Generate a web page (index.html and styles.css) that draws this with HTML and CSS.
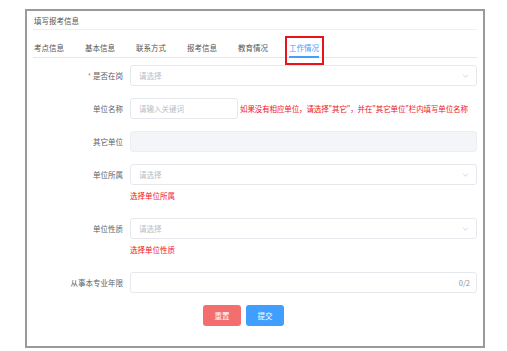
FILE: index.html
```html
<!DOCTYPE html>
<html lang="zh">
<head>
<meta charset="utf-8">
<link rel="stylesheet" href="styles.css">
</head>
<body>
<div class="frame">
  <div class="title">填写报考信息</div>
  <div class="tabs">
    <span class="tab">考点信息</span>
    <span class="tab">基本信息</span>
    <span class="tab">联系方式</span>
    <span class="tab">报考信息</span>
    <span class="tab">教育情况</span>
    <span class="tab active">工作情况<span class="mark"></span></span>
  </div>
  <div class="form">
    <div class="row">
      <div class="label"><span class="req">*</span> 是否在岗</div>
      <div class="control">
        <div class="input select"><span class="ph">请选择</span><svg class="chev" viewBox="0 0 8 5" width="7" height="4"><path d="M1 1l3 3 3-3" fill="none" stroke="#c6c9d0" stroke-width="1"/></svg></div>
      </div>
    </div>
    <div class="row">
      <div class="label">单位名称</div>
      <div class="control inline">
        <div class="input short"><span class="ph">请输入关键词</span></div>
        <span class="hint">如果没有相应单位，请选择"其它"，并在"其它单位"栏内填写单位名称</span>
      </div>
    </div>
    <div class="row">
      <div class="label">其它单位</div>
      <div class="control">
        <div class="input disabled"></div>
      </div>
    </div>
    <div class="row">
      <div class="label">单位所属</div>
      <div class="control">
        <div class="input select"><span class="ph">请选择</span><svg class="chev" viewBox="0 0 8 5" width="7" height="4"><path d="M1 1l3 3 3-3" fill="none" stroke="#c6c9d0" stroke-width="1"/></svg></div>
        <div class="err">选择单位所属</div>
      </div>
    </div>
    <div class="row">
      <div class="label">单位性质</div>
      <div class="control">
        <div class="input select"><span class="ph">请选择</span><svg class="chev" viewBox="0 0 8 5" width="7" height="4"><path d="M1 1l3 3 3-3" fill="none" stroke="#c6c9d0" stroke-width="1"/></svg></div>
        <div class="err">选择单位性质</div>
      </div>
    </div>
    <div class="row">
      <div class="label">从事本专业年限</div>
      <div class="control">
        <div class="input count"><span class="ph"></span><span class="num">0/2</span></div>
      </div>
    </div>
    <div class="actions">
      <button class="btn reset" type="button">重置</button>
      <button class="btn submit" type="button">提交</button>
    </div>
  </div>
</div>
</body>
</html>
```

FILE: styles.css
```css
* { box-sizing: border-box; }
html, body { margin: 0; padding: 0; background: #fff; }
body {
  font-family: "Noto Sans CJK SC", "Noto Sans", sans-serif;
  font-size: 7.5px;
  color: #606266;
}
.frame {
  margin: 9px 0 0 25px;
  width: 460px;
  height: 339px;
  border: 2px solid #9a9a9a;
  padding: 0 6px;
}
.title {
  height: 19px;
  line-height: 19px;
  padding-left: 1px;
  color: #555;
  border-bottom: 1px solid #ebeef5;
}
.tabs {
  display: flex;
  gap: 21px;
  padding-left: 1px;
  border-bottom: 1px solid #e4e7ed;
}
.tab {
  position: relative;
  padding: 12px 0 3px;
  line-height: 12px;
  color: #555;
}
.tab.active { color: #409eff; }
.tab.active::after {
  content: "";
  position: absolute;
  left: 0; right: 0; bottom: -1px;
  height: 2px;
  background: #409eff;
}
.mark {
  position: absolute;
  left: -4px; right: -5px;
  top: 6px; bottom: -8px;
  border: 2px solid #e8131b;
  z-index: 2;
}
.form { padding-top: 7px; }
.row {
  display: grid;
  grid-template-columns: 90px 1fr;
  column-gap: 7px;
  margin-bottom: 12px;
}
.label {
  text-align: right;
  line-height: 21px;
  height: 21px;
  color: #606266;
}
.req { color: #f56c6c; }
.control.inline { display: flex; align-items: center; gap: 2px; }
.input {
  height: 21px;
  border: 1px solid #e6e8ee;
  border-radius: 3px;
  padding: 0 8px;
  display: flex;
  align-items: center;
  justify-content: space-between;
  background: #fff;
}
.input.short { width: 108px; }
.input.disabled { background: #f3f5f8; border-color: #eceef2; }
.ph { color: #b9bcc4; }
.chev { display: block; margin-right: -1px; }
.num { color: #909399; margin-right: -2px; }
.hint { color: #f0141c; white-space: nowrap; letter-spacing: -0.12px; }
.err {
  height: 21px;
  line-height: 21px;
  color: #f0141c;
}
.actions {
  display: flex;
  gap: 5px;
  padding-left: 170px;
}
.btn {
  width: 38px;
  height: 21px;
  border: none;
  border-radius: 3px;
  color: #fff;
  font-family: inherit;
  font-size: 7.5px;
  padding: 0;
  cursor: pointer;
}
.btn.reset { background: #f36f6f; }
.btn.submit { background: #409eff; }
```
